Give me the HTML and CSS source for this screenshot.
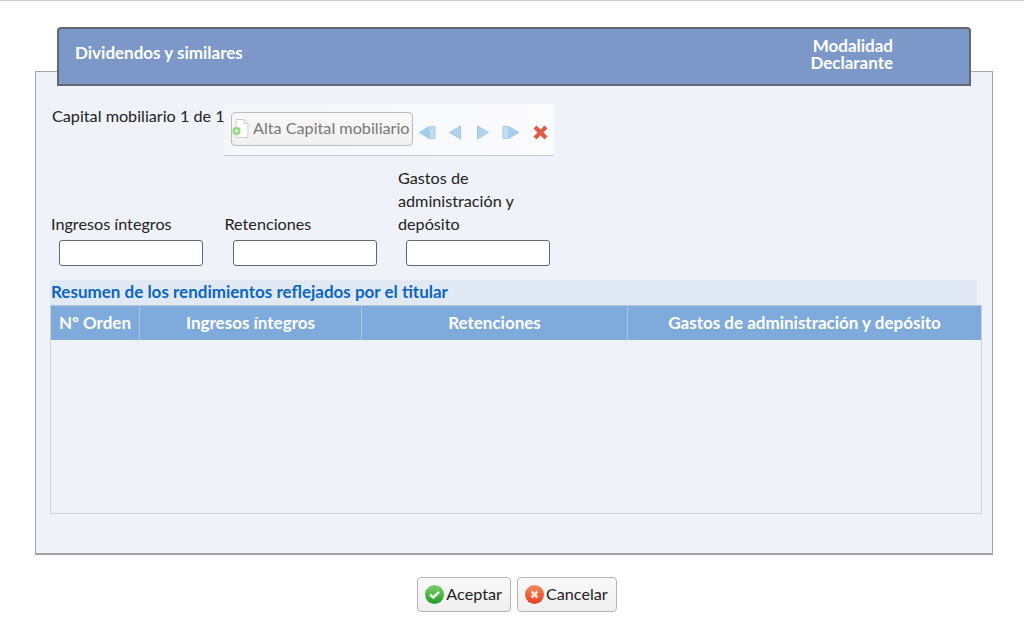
FILE: index.html
```html
<!DOCTYPE html>
<html lang="en">
<head>
    <meta charset="UTF-8">
    <title>Dividendos y similares</title>
    <link rel="stylesheet" href="styles.css">
</head>
<body>

<div class="page">

    <!-- Title bar, overlaps the top of the panel -->
    <div class="title-bar">
        <span class="title">Dividendos y similares</span>
        <div class="mode">
            <div>Modalidad</div>
            <div>Declarante</div>
        </div>
    </div>

    <div class="panel">

        <div class="record-row">
            <span class="record-count">Capital mobiliario 1 de 1</span>
            <div class="toolbar">
                <button type="button" class="add-btn">
                    <svg width="18" height="22" viewBox="0 0 18 22">
                        <path d="M4 2.500h8l4 4v14H4z" fill="#fbfbfb" stroke="#cfcfcf"/>
                        <path d="M12 2.500v4h4" fill="#eee" stroke="#cfcfcf"/>
                        <circle cx="4.500" cy="14" r="4" fill="#93d884"/>
                        <path d="M4.500 12v4M2.500 14h4" stroke="#d9f3d0" stroke-width="1.400"/>
                    </svg>
                    Alta Capital mobiliario
                </button>
                <svg class="nav-icon" width="18" height="15" viewBox="0 0 18 15">
                    <path d="M0.500 7.500L11 1v13z" fill="#a5cdec"/>
                    <path d="M11.500 1.500h5.500v12h-5.500z" fill="#c3dcf0" stroke="#a5cdec"/>
                </svg>
                <svg class="nav-icon" width="12" height="15" viewBox="0 0 12 15">
                    <path d="M0.500 7.500L11.500 1v13z" fill="#b2d3ee" stroke="#a0c8e8"/>
                </svg>
                <svg class="nav-icon next-icon" width="12" height="15" viewBox="0 0 12 15">
                    <path d="M11.500 7.500L0.500 1v13z" fill="#b2d3ee" stroke="#a0c8e8"/>
                </svg>
                <svg class="nav-icon" width="18" height="15" viewBox="0 0 18 15">
                    <path d="M1 1.500h5.500v12H1z" fill="#c3dcf0" stroke="#a5cdec"/>
                    <path d="M17.500 7.500L7 1v13z" fill="#a5cdec"/>
                </svg>
                <svg class="nav-icon" width="15" height="15" viewBox="0 0 15 15">
                    <path d="M0.500 3.500L3.500 0.500 7.500 4.500 11.500 0.500 14.500 3.500 10.500 7.500 14.500 11.500 11.500 14.500 7.500 10.500 3.500 14.500 0.500 11.500 4.500 7.500z" fill="#de5b45"/>
                </svg>
            </div>
        </div>

        <div class="fields">
            <div class="field">
                <label>Ingresos íntegros</label>
                <input type="text" class="field-input">
            </div>
            <div class="field">
                <label>Retenciones</label>
                <input type="text" class="field-input">
            </div>
            <div class="field">
                <label>Gastos de administración y depósito</label>
                <input type="text" class="field-input">
            </div>
        </div>

        <h3 class="summary-title">Resumen de los rendimientos reflejados por el titular</h3>

        <div class="grid-box">
            <div class="grid-head">
                <div>Nº Orden</div>
                <div>Ingresos íntegros</div>
                <div>Retenciones</div>
                <div>Gastos de administración y depósito</div>
            </div>
        </div>

    </div>

    <div class="actions">
        <button type="button" class="action-btn">
            <svg width="19" height="19" viewBox="0 0 19 19">
                <defs>
                    <linearGradient id="okFill" x1="0" y1="0" x2="0" y2="1">
                        <stop offset="0" stop-color="#7fd06a"/>
                        <stop offset="1" stop-color="#1f9a26"/>
                    </linearGradient>
                </defs>
                <circle cx="9.500" cy="9.500" r="9.500" fill="url(#okFill)"/>
                <path d="M5 9.500L8.300 12.500 14 7" fill="none" stroke="#e4f7de" stroke-width="2.600"/>
            </svg>
            Aceptar
        </button>
        <button type="button" class="action-btn">
            <svg width="19" height="19" viewBox="0 0 19 19">
                <defs>
                    <linearGradient id="noFill" x1="0" y1="0" x2="0" y2="1">
                        <stop offset="0" stop-color="#f08a5c"/>
                        <stop offset="1" stop-color="#e63f22"/>
                    </linearGradient>
                </defs>
                <circle cx="9.500" cy="9.500" r="9.500" fill="url(#noFill)"/>
                <path d="M6.500 6.500l6 6M12.500 6.500l-6 6" fill="none" stroke="#fbe0d4" stroke-width="2.600"/>
            </svg>
            Cancelar
        </button>
    </div>

</div>

</body>
</html>
```

FILE: styles.css
```css
body {
    margin: 0;
    font-family: Lato, "Noto Sans", sans-serif;
    font-size: 16.200px;
    color: #222;
    background-color: #fff;
}

.page {
    border-top: 1px solid #ccc;
    padding: 26px 31px 0 35px;
}

.title-bar {
    position: relative;
    display: flex;
    justify-content: space-between;
    height: 59px;
    box-sizing: border-box;
    margin: 0 22px -15px 22px;
    padding: 8px 76px 0 16px;
    background-color: #7b98c9;
    border: 2px solid #63676f;
    border-radius: 4px 4px 0 0;
    color: #fff;
    font-size: 17px;
    font-weight: bold;
}

.title {
    margin-top: 5px;
}

.mode {
    line-height: 17px;
    text-align: right;
}

.panel {
    height: 484px;
    box-sizing: border-box;
    padding: 32px 10px 0 14px;
    background-color: #eff2f9;
    border: 1px solid #a3a3a3;
    border-bottom-width: 2px;
}

.record-row {
    display: flex;
    height: 52px;
}

.record-count {
    width: 172px;
    margin-top: 2px;
    padding-left: 2px;
    white-space: nowrap;
}

.toolbar {
    display: flex;
    align-items: center;
    gap: 13px;
    width: 330px;
    box-sizing: border-box;
    padding: 0 7px;
    background: linear-gradient(100deg, #f4f6fa, #fbfbfc);
    border-bottom: 1px solid #c8c8c8;
}

.add-btn {
    display: flex;
    align-items: center;
    gap: 3px;
    flex: none;
    width: 182px;
    height: 34px;
    margin: -2px -8px 0 0;
    padding: 0 0 2px 0;
    background: linear-gradient(#f8f8f8, #f0f0f0);
    border: 1px solid #bcbcbc;
    border-radius: 4px;
    color: #777;
    font: inherit;
    white-space: nowrap;
}

.nav-icon {
    flex: none;
    margin-top: 5px;
}

.next-icon {
    margin-left: 3px;
}

.fields {
    display: grid;
    grid-template-columns: repeat(3, 173.500px);
    align-items: end;
    height: 110px;
    margin-left: 1px;
}

.field label {
    display: block;
    width: 140px;
    line-height: 23px;
    margin-bottom: 5px;
}

.field-input {
    display: block;
    width: 144px;
    height: 26px;
    box-sizing: border-box;
    margin-left: 8px;
    background-color: #fff;
    border: 1px solid #666;
    border-radius: 3px;
}

.summary-title {
    height: 25px;
    margin: 14px 5px 0 0;
    padding-left: 1px;
    background-color: #e1eaf4;
    color: #0a66c2;
    font-size: 17px;
    line-height: 24px;
}

.grid-box {
    height: 209px;
    box-sizing: border-box;
    background-color: #eff2f9;
    border: 1px solid #cdd0d6;
    border-top: 0;
}

.grid-head {
    display: grid;
    grid-template-columns: 88px 222px 266px 1fr;
    height: 35px;
    box-sizing: border-box;
    background-color: #7fabdc;
    border-top: 1px solid #b6c4d6;
    color: #fff;
    font-size: 17px;
    font-weight: bold;
    line-height: 33px;
    text-align: center;
}

.grid-head div + div {
    border-left: 1px solid #a9c6e6;
}

.actions {
    display: flex;
    justify-content: center;
    gap: 6px;
    margin-top: 22px;
    padding-left: 6px;
}

.action-btn {
    display: flex;
    align-items: center;
    gap: 2px;
    height: 35px;
    padding: 0 8px 2px 7px;
    background: linear-gradient(#f9f9f9, #efefef);
    border: 1px solid #b5b5b5;
    border-radius: 4px;
    color: #222;
    font: inherit;
}

.action-btn svg {
    margin-top: 2px;
}
```
